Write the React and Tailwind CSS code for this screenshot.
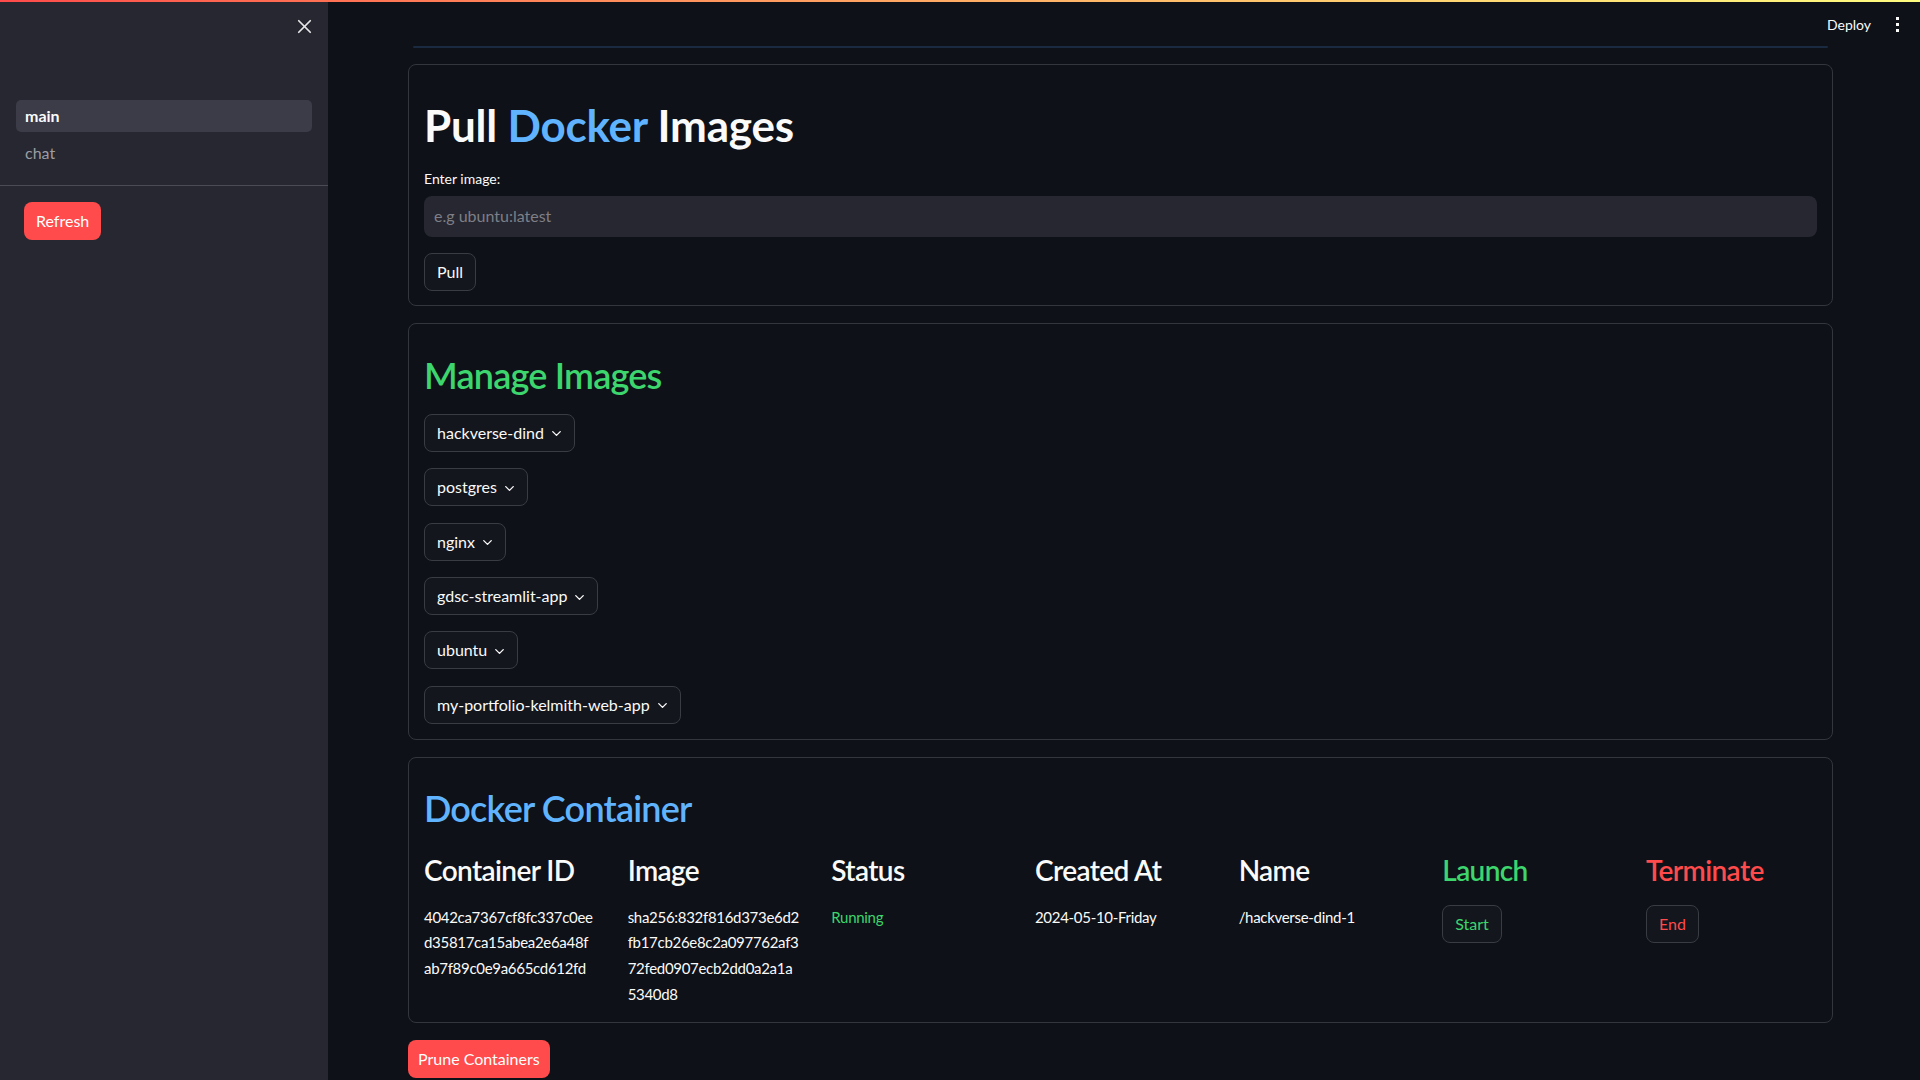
import React from "react";
import { ChevronDown, X } from "lucide-react";

const images = [
  "hackverse-dind",
  "postgres",
  "nginx",
  "gdsc-streamlit-app",
  "ubuntu",
  "my-portfolio-kelmith-web-app",
];

function Sidebar() {
  return (
    <aside className="w-[328px] shrink-0 h-full bg-[#262730] flex flex-col">
      <div className="h-[100px] flex justify-end pt-[14.5px] pr-[12.5px]">
        <X size={23} strokeWidth={1.8} className="text-[#e6e6e8]" />
      </div>
      <nav className="px-4 flex flex-col">
        <div className="h-[32px] rounded-[5px] bg-[#3b3c47] flex items-center px-[9px] text-[16px] font-bold text-[#fafafa]">
          main
        </div>
        <div className="h-[42px] flex items-center px-[9px] text-[16px] text-[#9c9da3]">chat</div>
      </nav>
      <div className="mt-[11px] h-px bg-[#4a4b55]" />
      <div className="px-6 pt-[16px]">
        <button className="h-[38px] px-[12px] rounded-lg bg-[#ff4b4b] text-white text-[16px]">Refresh</button>
      </div>
    </aside>
  );
}

function Card({ className, children }) {
  return (
    <section className={"border border-[#34363d] rounded-lg px-[15px] " + className}>{children}</section>
  );
}

function PullCard() {
  return (
    <Card className="pt-[33.5px] pb-[14px]">
      <h1 className="text-[44px] leading-[1.2] font-bold text-[#fafafa] tracking-[-0.005em]">
        Pull <span className="text-[#60b4ff]">Docker</span> Images
      </h1>
      <label className="block mt-[16.6px] text-[14px] leading-[21px] text-[#fafafa]">Enter image:</label>
      <div className="mt-[7px] h-[41px] rounded-lg bg-[#262730] flex items-center pl-[10px] text-[16px] text-[#7e7f86]">
        e.g ubuntu:latest
      </div>
      <button className="mt-[16px] h-[38px] px-[12px] rounded-lg border border-[#3a3c43] bg-[#13161d] text-[16px] text-[#fafafa]">
        Pull
      </button>
    </Card>
  );
}

function ManageCard() {
  return (
    <Card className="pt-[30.5px] pb-[15px]">
      <h2 className="text-[36px] leading-[1.2] font-semibold tracking-[-0.022em] text-[#3dd56d]">Manage Images</h2>
      <div className="mt-[16.3px] flex flex-col items-start gap-[16.4px]">
        {images.map((name) => (
          <button
            key={name}
            className="h-[38px] pl-[12px] pr-[10px] rounded-lg border border-[#3a3c43] bg-[#13161d] flex items-center gap-[5px] text-[16px] text-[#fafafa]"
          >
            <span>{name}</span>
            <ChevronDown size={15} strokeWidth={2.2} className="text-[#fafafa] mt-[2px]" />
          </button>
        ))}
      </div>
    </Card>
  );
}

function Cell({ className, children }) {
  return (
    <div className={"mt-[17px] text-[15px] leading-[25.6px] tracking-[-0.02em] " + className}>{children}</div>
  );
}

function ContainerCard() {
  const headers = [
    ["Container ID", "text-[#fafafa]"],
    ["Image", "text-[#fafafa]"],
    ["Status", "text-[#fafafa]"],
    ["Created At", "text-[#fafafa]"],
    ["Name", "text-[#fafafa]"],
    ["Launch", "text-[#3dd56d]"],
    ["Terminate", "text-[#ff4b4b]"],
  ];
  return (
    <Card className="pt-[29px] pb-[14.6px]">
      <h2 className="text-[36px] leading-[1.2] font-semibold tracking-[-0.022em] text-[#60b4ff]">Docker Container</h2>
      <div className="mt-[24.2px] grid grid-cols-[repeat(7,187.67px)] gap-x-4">
        {headers.map(([h, c]) => (
          <h3 key={h} className={"text-[28px] leading-[1.2] font-semibold tracking-[-0.022em] " + c}>
            {h}
          </h3>
        ))}
        <Cell className="text-[#fafafa]">
          4042ca7367cf8fc337c0ee
          <br />
          d35817ca15abea2e6a48f
          <br />
          ab7f89c0e9a665cd612fd
        </Cell>
        <Cell className="text-[#fafafa]">
          sha256:832f816d373e6d2
          <br />
          fb17cb26e8c2a097762af3
          <br />
          72fed0907ecb2dd0a2a1a
          <br />
          5340d8
        </Cell>
        <Cell className="text-[#3dd56d]">Running</Cell>
        <Cell className="text-[#fafafa]">2024-05-10-Friday</Cell>
        <Cell className="text-[#fafafa]">/hackverse-dind-1</Cell>
        <div className="mt-[17px]">
          <button className="h-[38px] px-[12px] rounded-lg border border-[#3a3c43] bg-[#13161d] text-[16px] text-[#3dd56d]">
            Start
          </button>
        </div>
        <div className="mt-[17px]">
          <button className="h-[38px] px-[12px] rounded-lg border border-[#3a3c43] bg-[#13161d] text-[16px] text-[#ff4b4b]">
            End
          </button>
        </div>
      </div>
    </Card>
  );
}

export default function App() {
  return (
    <div className="relative h-screen w-full overflow-hidden bg-[#0e1117] flex font-['Lato','Noto_Sans',sans-serif]">
      <div className="absolute top-0 left-0 right-0 h-[2px] bg-gradient-to-r from-[#ff4b4b] to-[#fffd80] z-10" />
      <Sidebar />
      <main className="flex-1 flex flex-col">
        <header className="h-[46px] flex items-center justify-end pt-[2px] pr-[21px] gap-[25px]">
          <span className="text-[14px] text-[#fafafa]">Deploy</span>
          <div className="flex flex-col gap-[3px]">
            <span className="w-[3px] h-[3px] bg-[#fafafa]" />
            <span className="w-[3px] h-[3px] bg-[#fafafa]" />
            <span className="w-[3px] h-[3px] bg-[#fafafa]" />
          </div>
        </header>
        <div className="ml-[80px] w-[1425px] flex flex-col">
          <div className="mx-[5px] h-[2px] rounded-full bg-[#1a2a40]" />
          <div className="mt-[16px] flex flex-col gap-[17px]">
            <PullCard />
            <ManageCard />
            <ContainerCard />
          </div>
          <div className="mt-[17px]">
            <button className="h-[38px] px-[10px] rounded-lg bg-[#ff4b4b] text-white text-[16px]">Prune Containers</button>
          </div>
        </div>
      </main>
    </div>
  );
}
